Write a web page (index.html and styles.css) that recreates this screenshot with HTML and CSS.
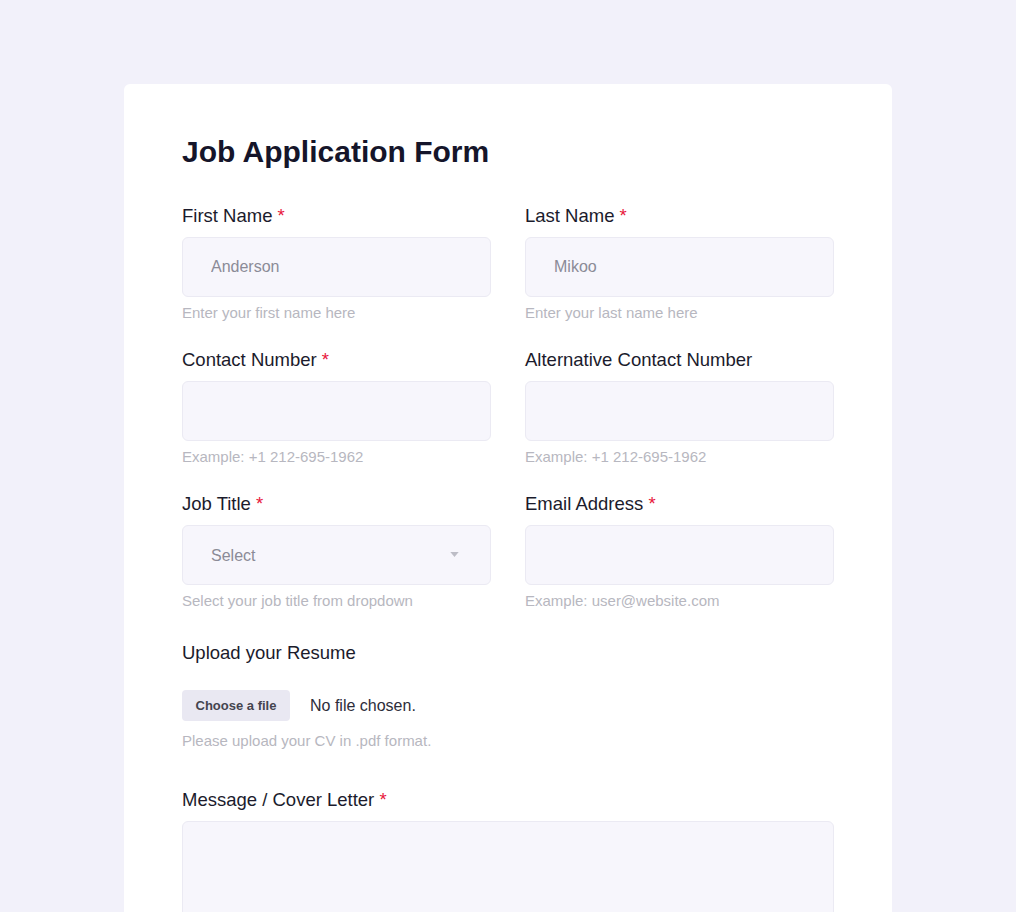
FILE: index.html
```html
<!DOCTYPE html>
<html lang="en">
<head>
<meta charset="utf-8">
<title>Job Application Form</title>
<link rel="stylesheet" href="styles.css">
</head>
<body>
<main class="card">
  <h1 class="title">Job Application Form</h1>
  <div class="grid">
    <div class="field">
      <label class="label">First Name <span class="req">*</span></label>
      <input class="input" type="text" value="Anderson">
      <div class="help">Enter your first name here</div>
    </div>
    <div class="field">
      <label class="label">Last Name <span class="req">*</span></label>
      <input class="input" type="text" value="Mikoo">
      <div class="help">Enter your last name here</div>
    </div>
    <div class="field">
      <label class="label">Contact Number <span class="req">*</span></label>
      <input class="input" type="text">
      <div class="help">Example: +1 212-695-1962</div>
    </div>
    <div class="field">
      <label class="label">Alternative Contact Number</label>
      <input class="input" type="text">
      <div class="help">Example: +1 212-695-1962</div>
    </div>
    <div class="field">
      <label class="label">Job Title <span class="req">*</span></label>
      <div class="select-wrap">
        <select class="input select"><option>Select</option></select>
        <svg class="caret" width="10" height="6" viewBox="0 0 10 6"><path d="M0 0H10L5 6Z" fill="#bdbdc6"/></svg>
      </div>
      <div class="help">Select your job title from dropdown</div>
    </div>
    <div class="field">
      <label class="label">Email Address <span class="req">*</span></label>
      <input class="input" type="text">
      <div class="help">Example: user@website.com</div>
    </div>
  </div>
  <div class="upload">
    <label class="label">Upload your Resume</label>
    <div class="file-row">
      <span class="file-btn">Choose a file</span>
      <span class="file-name">No file chosen.</span>
    </div>
    <div class="help help-upload">Please upload your CV in .pdf format.</div>
  </div>
  <div class="message">
    <label class="label">Message / Cover Letter <span class="req">*</span></label>
    <textarea class="input textarea"></textarea>
  </div>
</main>
</body>
</html>
```
FILE: styles.css
```css
* { box-sizing: border-box; }
html, body { margin: 0; padding: 0; }
body {
  background: #f2f1fa;
  font-family: "Liberation Sans", Arial, sans-serif;
  color: #1b1b2c;
  padding-top: 84px;
  overflow: hidden;
}
.card {
  width: 768px;
  margin: 0 auto;
  background: #ffffff;
  border-radius: 6px;
  padding: 50px 58px 40px;
}
.title {
  margin: 0 0 35px;
  font-size: 30px;
  line-height: 36px;
  font-weight: 700;
  color: #15152a;
}
.grid {
  display: grid;
  grid-template-columns: 309px 309px;
  column-gap: 34px;
  row-gap: 28px;
}
.field { display: flex; flex-direction: column; }
.label {
  display: block;
  font-size: 18.5px;
  line-height: 22px;
  color: #1b1b2c;
  margin-bottom: 10px;
}
.req { color: #e8173c; }
.input {
  display: block;
  width: 100%;
  height: 60px;
  background: #f7f6fc;
  border: 1px solid #ebeaf3;
  border-radius: 6px;
  padding: 0 28px;
  font-family: inherit;
  font-size: 16px;
  color: #8b8b97;
  outline: none;
}
.select-wrap { position: relative; }
.select {
  appearance: none;
  -webkit-appearance: none;
}
.caret {
  position: absolute;
  right: 32px;
  top: 27px;
  width: 9px;
  height: 5px;
  pointer-events: none;
}
.help {
  margin-top: 8px;
  font-size: 15px;
  line-height: 16px;
  color: #b7b7c0;
}
.upload { margin-top: 33px; }
.file-row {
  display: flex;
  align-items: center;
  gap: 20px;
  margin-top: 26px;
}
.file-btn {
  display: inline-flex;
  align-items: center;
  justify-content: center;
  width: 108px;
  height: 31px;
  background: #e9e8f2;
  border-radius: 4px;
  font-size: 13px;
  font-weight: 700;
  color: #44444f;
}
.file-name {
  font-size: 16px;
  color: #2d2d3a;
}
.help-upload { margin-top: 12px; }
.message { margin-top: 40px; }
.textarea {
  height: 160px;
  resize: none;
  padding: 18px 28px;
}
```
